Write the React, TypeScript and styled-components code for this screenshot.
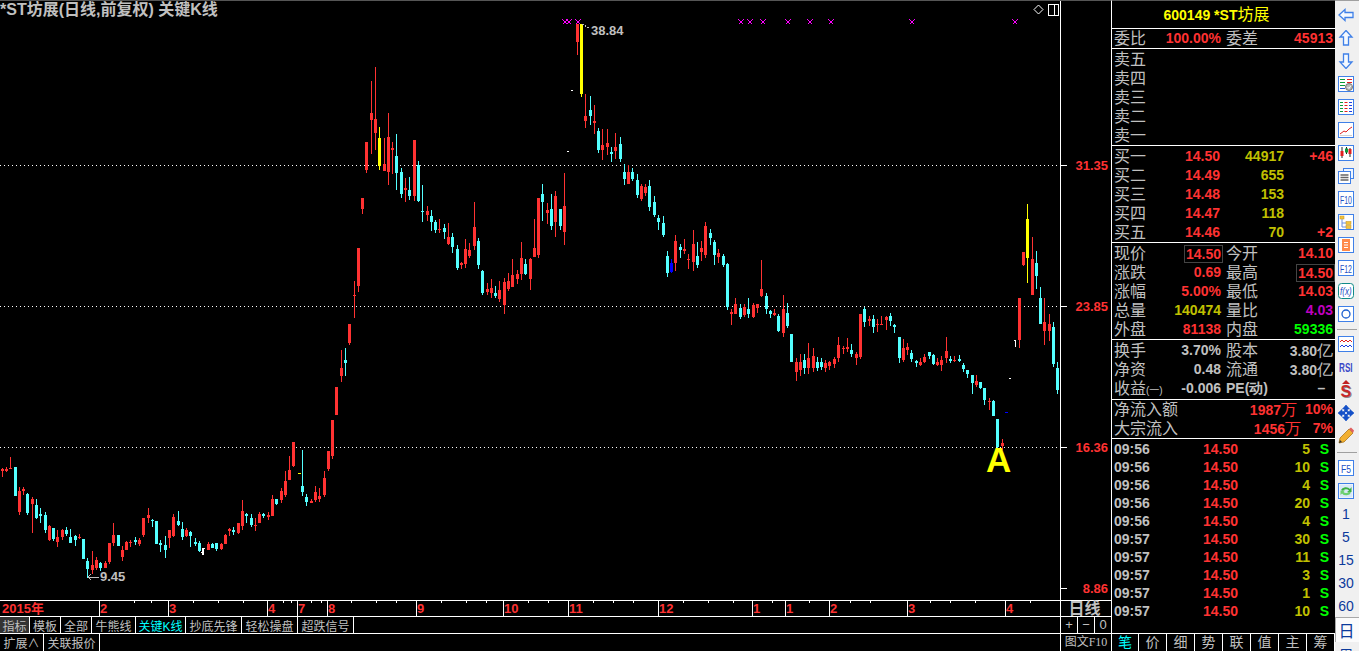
import * as React from "react";
import styled, { createGlobalStyle } from "styled-components";

const RED = "#ff3232";
const CYAN = "#54ffff";
const GREY = "#c0c0c0";
const OLIVE = "#c0c000";
const ICON = "#3f80e8";
const LATIN = '"Liberation Sans", Arial, sans-serif';
const CJK = '"Liberation Sans", "Noto Sans CJK SC", sans-serif';

type Candle = { kind: string; x: number; high: number; top: number; bottom: number; low: number };

// candles are read off the picture: kind x high bodyTop bodyBottom low
const seg = (ox: number, oy: number, scale: number, text: string): Candle[] =>
  text
    .trim()
    .split(/[,\n]+/)
    .map((line) => line.trim().split(/\s+/))
    .filter((p) => p.length === 6)
    .map((p) => {
      const n = p.slice(1).map(Number);
      return {
        kind: p[0],
        x: ox + Math.floor(n[0] / scale),
        high: Math.round(oy + n[1] / scale),
        top: Math.round(oy + n[2] / scale),
        bottom: Math.round(oy + n[3] / scale),
        low: Math.round(oy + n[4] / scale),
      };
    });

const candles: Candle[] = [
  ...seg(0, 430, 3, `
    r 7 114 118 124 140, r 19 111 118 122 125, r 31 81 113 118 118, c 46 111 111 198 198,
    r 58 171 183 246 254, r 70 171 176 183 195, c 82 188 192 249 255, r 97 202 207 222 308,
    c 109 207 225 265 267, c 121 234 252 258 279, c 136 247 255 300 308, r 148 285 288 330 332,
    c 160 294 294 327 333, r 172 300 321 336 351, r 187 297 300 321 330, c 199 291 300 312 318,
    c 211 297 321 339 339, c 226 315 318 330 348, r 238 312 320 324 328, c 250 327 327 387 387,
    c 262 384 393 417 444, r 277 363 405 420 432, r 289 381 390 414 420, c 301 396 399 414 423,
    r 316 393 399 414 414, r 328 339 339 396 402, r 340 279 315 339 348, c 355 315 315 348 348,
    r 367 348 360 381 393, r 379 333 336 360 360, r 391 330 336 339 351, c 406 321 330 336 345,
    r 418 324 330 342 348, r 430 264 264 315 321, r 445 234 255 264 279, c 457 267 270 272 291,
    c 469 273 273 342 342, c 481 330 339 344 366, c 496 318 345 360 384, r 508 300 300 324 354,
    r 520 252 261 318 321, c 535 243 273 285 288, c 547 276 297 321 330, r 559 294 300 318 321,
    c 571 303 306 318 351, c 586 324 336 342 348, c 598 333 339 363 366, w 610 354 354 357 375,
    r 625 336 342 360 360, c 637 339 342 354 354, c 649 339 339 357 363, r 664 339 342 357 360,
    r 676 312 315 342 342, r 688 294 297 303 318, c 700 291 300 306 315, r 715 279 279 309 312,
    r 727 210 243 288 300, c 739 249 252 258 279, c 754 252 264 285 291, r 766 264 285 288 303,
    r 778 246 252 279 279, c 790 249 252 258 264, r 805 246 256 260 270, r 817 195 207 258 258,
    c 829 207 207 222 225, r 844 174 183 210 219, r 856 123 153 195 201, r 868 78 120 150 150,
    r 880 36 36 108 111, c 907 60 168 186 198, c 919 192 201 216 228, r 934 207 212 219 219,
    r 946 168 186 210 216, r 958 174 198 207 216, r 973 123 144 195 201, r 985 63 63 117 123`),
  ...seg(300, 190, 3, `
    r 97 690 690 798 807, r 109 591 591 675 675, r 124 480 534 558 576, c 136 474 510 519 558,
    r 148 402 402 459 465, r 163 273 315 318 384, r 175 174 174 288 306`),
  ...seg(340, 0, 3, `
    r 67 594 594 627 642, r 79 426 426 510 519, r 94 243 339 360 462, r 106 201 357 399 450,
    y 118 381 414 498 510, r 133 414 492 513 513, r 145 339 411 516 555, r 157 426 444 450 522,
    c 169 402 468 519 570, c 184 504 516 582 594, r 196 534 564 570 606, c 208 531 570 588 600,
    r 223 420 420 588 603, c 235 483 495 603 606, c 247 555 633 636 666`),
  ...seg(300, 190, 3, `
    r 382 48 63 75 93, c 394 60 78 96 123, c 406 90 96 120 129, r 418 87 117 120 129,
    c 433 102 114 126 147, r 445 99 141 162 165, c 457 129 141 171 189, c 472 165 177 234 240,
    r 484 216 219 225 237, r 496 147 177 222 234, r 508 159 180 198 204, r 523 36 111 168 180,
    c 535 144 153 225 237, c 547 240 243 309 315, r 562 279 297 306 315, r 574 267 294 309 324,
    c 586 288 309 318 324, r 598 273 300 327 336, r 613 264 276 345 372, r 625 249 273 297 303,
    r 637 207 255 291 291, r 652 240 252 267 282, r 664 156 204 252 270, c 676 207 222 252 255,
    r 691 204 207 267 300, r 703 87 174 201 201`),
  ...seg(0, 0, 1, `
    r 538 198 198 255 258, c 542 184 194 202 221, r 547 203 210 213 224, c 551 194 209 226 230,
    r 555 191 196 222 237, c 560 209 209 226 230, r 564 173 206 232 245`),
  ...seg(340, 0, 3, `
    r 712 72 72 126 165, y 724 72 72 282 291, r 736 282 348 363 384, c 751 288 330 348 375,
    r 763 315 363 369 402, c 775 384 393 450 459, r 787 387 435 450 480, r 802 387 429 441 465,
    c 814 441 456 462 486, r 826 399 441 453 477, c 841 411 432 477 486, c 853 492 516 537 555,
    r 865 495 516 552 552, c 877 504 516 537 543, c 892 522 540 585 594`),
  ...seg(0, 0, 1, `r 641 184 186 199 201, r 645 184 187 193 196, c 649 180 186 207 211`),
  ...seg(630, 190, 3, `
    c 73 18 36 75 81, c 85 75 84 96 120, c 100 78 99 135 141, c 112 183 198 249 261,
    b 124 207 219 246 249, r 136 135 153 219 243, c 151 162 171 180 204, r 163 147 177 183 192,
    r 175 192 207 210 237, r 190 120 162 216 243, c 202 156 198 225 234, r 214 153 174 186 213,
    r 226 96 108 195 204, c 241 117 129 144 165, c 253 150 156 195 225, r 265 177 189 201 219,
    c 280 192 198 225 231, c 292 219 222 351 360, r 304 357 366 372 405, r 316 324 342 372 372,
    c 331 342 354 381 387, r 343 342 351 375 381, c 355 324 357 372 384, r 370 339 345 381 384,
    r 382 342 342 354 369, r 394 210 297 318 321, c 409 309 318 357 372, c 421 360 363 372 384,
    r 433 357 369 375 378, c 445 372 378 423 426, r 460 315 357 429 441, c 472 339 369 408 414`),
  ...seg(0, 0, 1, `
    c 791 334 334 362 362, r 796 358 362 372 381, r 800 354 362 370 376, c 804 354 360 368 374,
    r 808 343 358 368 374, r 813 348 356 368 372, c 817 357 362 368 371, c 821 358 362 367 370,
    r 825 360 363 368 372, r 829 361 362 366 370, r 834 357 359 364 368, r 838 337 345 358 362`),
  ...seg(840, 190, 3, `
    r 10 468 474 477 492, r 22 444 471 477 486, c 34 462 480 492 501, r 49 486 492 504 525,
    r 61 372 372 501 507, c 73 351 357 396 411, r 88 378 387 393 408, c 100 375 387 411 429,
    r 112 387 402 405 426, r 124 378 402 405 405, r 139 378 381 390 420, c 151 369 378 393 408,
    c 163 402 405 411 429, c 178 441 441 504 519, r 190 447 474 510 516, r 202 459 471 480 495,
    c 214 480 489 507 516, c 229 510 513 519 531, r 241 504 516 525 528, r 253 492 501 516 519,
    c 268 486 486 498 507, c 280 492 495 522 525, r 292 504 516 525 528, r 304 498 510 525 543,
    r 319 441 483 504 519, c 331 498 507 513 519, r 343 498 510 513 516, c 358 495 507 513 516,
    c 370 519 525 537 546, c 382 540 540 552 564, c 397 555 555 579 612, r 409 555 573 585 591,
    c 421 576 576 594 597, c 433 594 594 630 645, r 448 624 633 636 660, c 460 630 633 678 678,
    c 472 687 687 770 775, r 487 747 759 768 780, r 538 324 324 450 474, r 550 186 186 225 228,
    y 562 42 87 204 279, r 577 141 207 315 315, c 589 183 219 258 297, c 601 291 324 402 402,
    r 613 324 396 423 465, r 628 372 402 423 453, c 640 396 411 522 531, c 652 516 534 600 612`),
];

const KIND_COLORS: Record<string, string> = { r: RED, c: CYAN, y: "#ffff00", b: "#0000ff", w: "#ffffff" };

const GRID_LINES = [165, 306, 447];
const SIGNALS = [565, 569, 578, 741, 750, 763, 788, 810, 831, 912, 1015];
const STRAY_DASHES = [
  { x: 298, y: 473, w: 3, color: "#ffff00" },
  { x: 571, y: 90, w: 2, color: "#ffffff" },
  { x: 567, y: 151, w: 2, color: "#ffffff" },
  { x: 1009, y: 378, w: 2, color: "#ffffff" },
  { x: 1005, y: 412, w: 3, color: "#0000ff" },
];

const GlobalStyle = createGlobalStyle`
  html, body {
    margin: 0;
    padding: 0;
    background: #000;
    overflow: hidden;
  }
  * {
    box-sizing: border-box;
  }
`;

const Page = styled.div`
  display: flex;
  width: 1359px;
  height: 651px;
  background: #000;
  font-family: ${CJK};
  color: ${GREY};
`;

const LeftPane = styled.div`
  display: flex;
  flex-direction: column;
  width: 1112px;
  height: 651px;
  border-top: 1px solid #555;
  border-right: 1px solid #fff;
`;

const ChartRow = styled.div`
  display: flex;
  height: 599px;
`;

const Plot = styled.div`
  position: relative;
  width: 1060px;
  height: 599px;
  overflow: hidden;
`;

const ChartSvg = styled.svg`
  display: block;
`;

const Title = styled.div`
  position: absolute;
  left: 0;
  top: 0;
  font-size: 16px;
  line-height: 17px;
  font-weight: 700;
  white-space: nowrap;
`;

const Note = styled.div<{ $x: number; $y: number }>`
  position: absolute;
  left: ${(p) => p.$x}px;
  top: ${(p) => p.$y}px;
  font-family: ${LATIN};
  font-size: 13px;
  line-height: 15px;
  font-weight: 700;
`;

const Marker = styled.div`
  position: absolute;
  left: 986px;
  top: 439px;
  font-family: ${LATIN};
  font-size: 35px;
  line-height: 40px;
  font-weight: 700;
  color: #ffff00;
`;

const PriceAxis = styled.div`
  position: relative;
  width: 51px;
  border-left: 1px solid #fff;
`;

const AxisTick = styled.div<{ $y: number }>`
  position: absolute;
  left: 0;
  top: ${(p) => p.$y}px;
  width: 6px;
  height: 1px;
  background: #fff;
`;

const AxisLabel = styled.div<{ $y: number }>`
  position: absolute;
  right: 3px;
  top: ${(p) => p.$y}px;
  font-family: ${LATIN};
  font-size: 13px;
  line-height: 15px;
  font-weight: 700;
  color: ${RED};
`;

const StripRow = styled.div<{ $h: number }>`
  display: flex;
  height: ${(p) => p.$h}px;
  border-top: 1px solid #fff;
`;

const TimeAxis = styled.div`
  position: relative;
  width: 1060px;
  overflow: hidden;
`;

const TimeTick = styled.div<{ $x: number; $major?: boolean }>`
  position: absolute;
  left: ${(p) => p.$x}px;
  top: 0;
  width: 1px;
  height: ${(p) => (p.$major ? "15px" : "2px")};
  background: #fff;
`;

const TimeLabel = styled.div<{ $x: number }>`
  position: absolute;
  left: ${(p) => p.$x}px;
  top: 0;
  font-size: 13px;
  line-height: 15px;
  font-weight: 700;
  color: ${RED};
  white-space: nowrap;
`;

const PeriodBox = styled.div`
  width: 51px;
  padding-right: 3px;
  border-left: 1px solid #fff;
  font-size: 16px;
  line-height: 15px;
  font-weight: 700;
  text-align: center;
`;

const TabStrip = styled.div`
  display: flex;
  width: 1060px;
`;

const TabCell = styled.div<{ $w: number; $active?: boolean; $hot?: boolean }>`
  display: flex;
  align-items: center;
  justify-content: center;
  width: ${(p) => p.$w}px;
  border-right: 1px solid #fff;
  font-size: 12px;
  white-space: nowrap;
  background: ${(p) => (p.$active ? "#333" : "transparent")};
  color: ${(p) => (p.$hot ? "#00ffff" : GREY)};
`;

const StepGroup = styled.div`
  display: flex;
  width: 51px;
  border-left: 1px solid #fff;
`;

const StepCell = styled.div`
  flex: 1;
  font-family: ${LATIN};
  font-size: 13px;
  line-height: 16px;
  text-align: center;
  & + & {
    border-left: 1px solid #fff;
  }
`;

const F10Cell = styled.div`
  width: 51px;
  border-left: 1px solid #fff;
  font-size: 12px;
  line-height: 17px;
  text-align: center;
  white-space: nowrap;
  span {
    font-family: "Liberation Serif", serif;
  }
`;

const RightPane = styled.div`
  display: flex;
  flex-direction: column;
  width: 223px;
  height: 651px;
  border-top: 1px solid #555;
`;

const CodeHeader = styled.div`
  height: 28px;
  padding-right: 14px;
  border-bottom: 1px solid #fff;
  font-size: 14px;
  line-height: 28px;
  font-weight: 700;
  color: #ffff00;
  text-align: center;
  span {
    font-size: 16px;
    font-weight: 400;
  }
`;

const Section = styled.div<{ $h: number; $pad?: number }>`
  height: ${(p) => p.$h}px;
  padding: ${(p) => p.$pad || 0}px 2px 0 2px;
  border-bottom: 1px solid #fff;
`;

const Label = styled.span`
  font-size: 16px;
  font-weight: 400;
  color: ${GREY};
  white-space: nowrap;
`;

const Paren = styled.span`
  font-size: 10px;
`;

const Num = styled.span<{ $color?: string }>`
  font-family: ${LATIN};
  font-size: 14px;
  font-weight: 700;
  white-space: nowrap;
  color: ${(p) => p.$color || GREY};
`;

const Unit = styled.span`
  font-size: 16px;
  font-weight: 400;
`;

const BoxedNum = styled(Num)`
  display: inline-block;
  height: 18px;
  margin-right: -2px;
  padding: 0 1px;
  border: 1px solid #444;
  line-height: 16px;
`;

const BandRow = styled.div`
  display: grid;
  grid-template-columns: 32px 74px 64px 49px;
  height: 19px;
  line-height: 19px;
  text-align: right;
  ${Label} {
    text-align: left;
  }
`;

const PairGrid = styled.div`
  display: grid;
  grid-template-columns: 107px 107px;
  column-gap: 5px;
`;

const Pair = styled.div`
  display: flex;
  justify-content: space-between;
  height: 19px;
  line-height: 19px;
`;

const SellRow = styled.div`
  height: 19px;
  line-height: 19px;
`;

const FlowRow = styled.div`
  display: flex;
  height: 19px;
  line-height: 19px;
`;

const FlowAmount = styled.span`
  margin-left: auto;
  font-family: ${LATIN};
  font-size: 14px;
  font-weight: 700;
  color: ${RED};
`;

const FlowPct = styled(FlowAmount)<{ $w: number }>`
  flex: 0 0 ${(p) => p.$w}px;
  margin-left: 0;
  text-align: right;
`;

const TickRow = styled.div`
  display: grid;
  grid-template-columns: 35px 89px 72px 1fr;
  height: 18px;
  line-height: 18px;
  text-align: right;
  font-family: ${LATIN};
  font-size: 14px;
  font-weight: 700;
`;

const BookTabs = styled.div`
  display: flex;
  flex: 1;
`;

const BookTab = styled.div<{ $hot?: boolean }>`
  flex: 0 0 28px;
  font-size: 14px;
  line-height: 17px;
  text-align: center;
  color: ${(p) => (p.$hot ? "#00ffff" : GREY)};
  border-left: 1px solid #fff;
  &:first-child {
    flex-basis: 26px;
    border-left: 0;
  }
  &:last-child {
    flex-basis: 29px;
    border-right: 1px solid #fff;
  }
`;

const Toolbar = styled.div`
  display: flex;
  flex-direction: column;
  width: 24px;
  height: 651px;
  padding-top: 2px;
  background: #f0f0f0;
  border-top: 1px solid #a0a0a0;
  overflow: hidden;
`;

const ToolSlot = styled.div`
  display: flex;
  flex: 0 0 23px;
  align-items: center;
  justify-content: center;
  padding-right: 2px;
  font-family: ${CJK};
  font-size: 14px;
  color: #0b3a9c;
`;

const PressedSlot = styled(ToolSlot)`
  flex-basis: 24px;
  font-size: 16px;
  background: #fbfbfb;
  border-top: 1px solid #a8a8a8;
  border-left: 1px solid #a8a8a8;
`;

const ToolDivider = styled.div<{ $before: number; $after: number }>`
  flex: 0 0 1px;
  margin: ${(p) => p.$before}px 2px ${(p) => p.$after}px;
  background: #a0a0a0;
`;

const Glyph = ({ children }: { children: React.ReactNode }) => (
  <svg width="16" height="16" viewBox="0 0 16 16">
    {children}
  </svg>
);

const Framed = ({ children, stroke = ICON }: { children: React.ReactNode; stroke?: string }) => (
  <Glyph>
    <rect x="0.5" y="0.5" width="15" height="15" fill="#fff" stroke={stroke} />
    {children}
  </Glyph>
);

// narrow captions inside the toolbar icons, squeezed horizontally to fit the frame
const IconText = ({ children, x = 2, squeeze, size = 11, y = 12.5, italic, fill = "#1c4fc4", bold }: {
  children: string; x?: number; squeeze: number; size?: number; y?: number; italic?: boolean; fill?: string; bold?: boolean;
}) => (
  <text
    transform={`translate(${x} ${y}) scale(${squeeze} 1)`}
    fontSize={size}
    fill={fill}
    fontStyle={italic ? "italic" : "normal"}
    fontWeight={bold ? 700 : 400}
    style={{ fontFamily: "Liberation Sans, sans-serif" }}
  >
    {children}
  </text>
);

const toolIcons: React.ReactNode[] = [
  <Glyph><path d="M1 8 7 2.5V5.5H15V10.5H7V13.5Z" fill="#f4f9ff" stroke={ICON} strokeWidth="1.3" /></Glyph>,
  <Glyph><path d="M8 .5 14 7H10.5V15H5.5V7H2Z" fill="#f4f9ff" stroke={ICON} strokeWidth="1.3" /></Glyph>,
  <Glyph><path d="M8 15.5 14 9H10.5V1H5.5V9H2Z" fill="#f4f9ff" stroke={ICON} strokeWidth="1.3" /></Glyph>,
  <Framed>
    <path d="M2 3.5H7M2 6.5H7M2 9.5H7" stroke="#0a9a3a" />
    <path d="M9 3.5H14M9 6.5H14" stroke="#e02020" />
    <path d="M2 12.5H7" stroke="#2050d0" />
    <circle cx="11" cy="11" r="3.5" fill="#b8b8b8" stroke="#777" />
    <path d="M9.5 11 11 12.5 13 9.5" fill="none" stroke="#fff" />
  </Framed>,
  <Framed>
    <path d="M2 3.5H5M2 6.5H5M2 9.5H5M2 12.5H5" stroke="#0a9a3a" />
    <path d="M6.5 3.5H9.5M6.5 6.5H9.5M6.5 9.5H9.5M6.5 12.5H9.5" stroke="#e02020" />
    <path d="M11 3.5H14M11 6.5H14M11 9.5H14M11 12.5H14" stroke="#2040e0" />
  </Framed>,
  <Framed>
    <path d="M2 12 6 9 8 10 11 7 14 5" fill="none" stroke="#e02020" />
    <path d="M2 13.5H14" stroke="#d0d0d0" />
  </Framed>,
  <Framed>
    <path d="M4 2V13M8.5 2V9M12 3V12" stroke="#222" />
    <rect x="2.5" y="6" width="3" height="5" fill="#e02020" />
    <rect x="7" y="3.5" width="3" height="4" fill="#0a9a3a" />
    <rect x="10.5" y="4" width="3" height="5" fill="#e02020" />
  </Framed>,
  <Glyph>
    <rect x="5.5" y="0.5" width="10" height="10" fill="#eef5ff" stroke={ICON} />
    <rect x="0.5" y="3.5" width="12" height="12" fill="#fff" stroke={ICON} />
    <path d="M2.5 7H10.5M2.5 9.5H10.5M2.5 12H10.5" stroke="#666" strokeWidth="1.4" />
  </Glyph>,
  <Framed><IconText squeeze={0.63}>F10</IconText></Framed>,
  <Framed>
    <path d="M4 5V13H8M4 9H8" fill="none" stroke="#6a8fe0" />
    <rect x="2" y="2" width="4" height="3" fill="#f2c43c" stroke="#c09020" strokeWidth=".5" />
    <rect x="8" y="7.5" width="5" height="3" fill="#f2c43c" stroke="#c09020" strokeWidth=".5" />
    <rect x="8" y="11.5" width="5" height="3" fill="#f2c43c" stroke="#c09020" strokeWidth=".5" />
  </Framed>,
  <Framed>
    <rect x="4" y="2" width="8" height="12" fill="#ff8a4a" />
    <path d="M6 5.5H10M6 8H10M6 10.5H10" stroke="#fff" />
  </Framed>,
  <Framed><IconText squeeze={0.63}>F12</IconText></Framed>,
  <Glyph>
    <rect x="0.5" y="0.5" width="15" height="15" rx="3" fill="#fff" stroke="#0f8a88" />
    <IconText italic size={10} y={12} squeeze={0.8}>f(x)</IconText>
  </Glyph>,
  <Framed>
    <circle cx="8" cy="8" r="4" fill="none" stroke="#1c5fd0" strokeWidth="1.3" />
  </Framed>,
];

const analysisIcons: React.ReactNode[] = [
  <Framed>
    <path d="M2 6 4 4 6 6 8 4 10 6 12 4 14 6" fill="none" stroke="#e02020" />
    <path d="M2 11 4 9 6 11 8 9 10 11 12 9 14 11" fill="none" stroke="#2040e0" />
  </Framed>,
  <svg width="16" height="14" viewBox="0 0 16 14">
    <IconText x={1} y={12} size={12} squeeze={0.68} bold fill="#3a48c8">RSI</IconText>
  </svg>,
  <svg width="16" height="19" viewBox="0 0 16 19">
    <path d="M8 0 12 4H4Z" fill="#c02020" />
    <text x="3.5" y="18" fontSize="16" fontWeight="700" fill="#888" style={{ fontFamily: "Liberation Sans, sans-serif" }}>S</text>
    <text x="2.5" y="17" fontSize="16" fontWeight="700" fill="#c82828" style={{ fontFamily: "Liberation Sans, sans-serif" }}>S</text>
  </svg>,
  <svg width="16" height="16" viewBox="0 0 16 16">
    <path d="M8 0 11.5 4H9.5V6.5H12V4.5L16 8 12 11.5V9.5H9.5V12H11.5L8 16 4.5 12H6.5V9.5H4V11.5L0 8 4 4.5V6.5H6.5V4H4.5Z" fill="#1450c8" stroke="#1450c8" strokeWidth=".6" />
    <circle cx="8" cy="8" r="1" fill="#fff" />
  </svg>,
  <svg width="17" height="17" viewBox="0 0 17 17">
    <path d="M1 16 2 11 11 2 15 6 6 15Z" fill="#f2b030" stroke="#a06a10" strokeWidth=".7" />
    <path d="M11 2 13 0.5 16 3.5 15 6Z" fill="#e06060" />
    <path d="M1 16 2 13 4 15Z" fill="#333" />
  </svg>,
];

const refreshIcons: React.ReactNode[] = [
  <Framed><IconText x={3} squeeze={0.78}>F5</IconText></Framed>,
  <Framed>
    <rect x="1.5" y="1.5" width="13" height="13" fill="#d8e8f8" />
    <path d="M3 7A5 4 0 0 1 12 6L13.5 4V9H9L11 7.5A3.5 3 0 0 0 5 8Z" fill="#3cb043" />
    <path d="M13 9.5A5 4 0 0 1 4 10.5L2.5 12V7.5H7L5.5 9A3.5 3 0 0 0 11 8.5Z" fill="#6cd070" />
  </Framed>,
];

const months = [
  { x: 99, t: "2" }, { x: 168, t: "3" }, { x: 267, t: "4" }, { x: 297, t: "7" }, { x: 327, t: "8" },
  { x: 416, t: "9" }, { x: 503, t: "10" }, { x: 568, t: "11" }, { x: 658, t: "12" }, { x: 752, t: "1" },
  { x: 785, t: "1" }, { x: 829, t: "2" }, { x: 907, t: "3" }, { x: 1005, t: "4" },
];
const minorTicks = [134, 151, 193, 218, 243, 283, 291, 311, 321, 351, 376, 396, 441, 466, 486, 528, 548, 593, 613, 633, 683, 708, 733, 772, 809, 850, 870, 930, 950, 975, 1030];

const tabs = [
  { t: "指标", w: 30, active: true },
  { t: "模板", w: 31 },
  { t: "全部", w: 31 },
  { t: "牛熊线", w: 44 },
  { t: "关键K线", w: 50, hot: true },
  { t: "抄底先锋", w: 56 },
  { t: "轻松操盘", w: 56 },
  { t: "超跌信号", w: 56 },
];

const bands = [
  ["买一", "14.50", "44917", "+46"],
  ["买二", "14.49", "655", ""],
  ["买三", "14.48", "153", ""],
  ["买四", "14.47", "118", ""],
  ["买五", "14.46", "70", "+2"],
];

const ticks: [string, string][] = [
  ["09:56", "5"], ["09:56", "10"], ["09:56", "4"], ["09:56", "20"], ["09:56", "4"],
  ["09:57", "30"], ["09:57", "11"], ["09:57", "3"], ["09:57", "1"], ["09:57", "10"],
];

const Chart = () => (
  <ChartSvg width="1060" height="599" viewBox="0 1 1060 599" shapeRendering="crispEdges">
    {GRID_LINES.map((y) => (
      <line key={y} x1="0" x2="1060" y1={y + 0.5} y2={y + 0.5} stroke="#fff" strokeDasharray="1 3" />
    ))}
    {candles.map((c) => {
      const color = KIND_COLORS[c.kind];
      return (
        <g key={c.x} fill={color}>
          <rect x={c.x} y={c.high} width="1" height={Math.max(c.low - c.high, 1)} />
          <rect x={c.x - 1} y={c.top} width="3" height={Math.max(c.bottom - c.top, 1)} />
        </g>
      );
    })}
    {STRAY_DASHES.map((d) => (
      <rect key={d.x} x={d.x} y={d.y} width={d.w} height="1" fill={d.color} />
    ))}
    <path d="M1014 340h2v7h-1v-6h-1z" fill="#fff" />
    <path d="M202 548h1v7h-1zM201 552h1v1h-1z" fill="#fff" />
    {SIGNALS.map((x) => (
      <path key={x} d={`M${x - 2.5} 19.5l5 5M${x + 2.5} 19.5l-5 5`} stroke="#ff00ff" strokeWidth="1.3" fill="none" />
    ))}
    <path d="M582 24 589 28" stroke={GREY} strokeDasharray="2 1" fill="none" />
    <path d="M88 577H99M88 577l3-3M88 577l3 3" stroke={GREY} fill="none" />
    <path d="M1038.5 5 1043 9.5 1038.5 14 1034 9.5Z" fill="none" stroke="#fff" shapeRendering="auto" />
    <path d="M1048.5 4.5H1058.5V15.5H1048.5ZM1054.5 4.5V15.5" fill="none" stroke="#fff" />
  </ChartSvg>
);

export default function App() {
  return (
    <>
      <GlobalStyle />
      <Page>
        <LeftPane>
          <ChartRow>
            <Plot>
              <Chart />
              <Title>*ST坊展(日线,前复权) 关键K线</Title>
              <Note $x={591} $y={22}>38.84</Note>
              <Note $x={100} $y={568}>9.45</Note>
              <Marker>A</Marker>
            </Plot>
            <PriceAxis>
              <AxisTick $y={164} /><AxisLabel $y={157}>31.35</AxisLabel>
              <AxisTick $y={305} /><AxisLabel $y={298}>23.85</AxisLabel>
              <AxisTick $y={446} /><AxisLabel $y={439}>16.36</AxisLabel>
              <AxisTick $y={587} /><AxisLabel $y={580}>8.86</AxisLabel>
            </PriceAxis>
          </ChartRow>
          <StripRow $h={16}>
            <TimeAxis>
              <TimeLabel $x={2}>2015年</TimeLabel>
              {minorTicks.map((x) => <TimeTick key={x} $x={x} />)}
              {months.map((m) => (
                <React.Fragment key={m.x}>
                  <TimeTick $x={m.x} $major />
                  <TimeLabel $x={m.x + 1}>{m.t}</TimeLabel>
                </React.Fragment>
              ))}
            </TimeAxis>
            <PeriodBox>日线</PeriodBox>
          </StripRow>
          <StripRow $h={17}>
            <TabStrip>
              {tabs.map((t) => (
                <TabCell key={t.t} $w={t.w} $active={t.active} $hot={t.hot}>{t.t}</TabCell>
              ))}
            </TabStrip>
            <StepGroup>
              <StepCell>+</StepCell>
              <StepCell>−</StepCell>
              <StepCell>0</StepCell>
            </StepGroup>
          </StripRow>
          <StripRow $h={18}>
            <TabStrip>
              <TabCell $w={44}>扩展∧</TabCell>
              <TabCell $w={56}>关联报价</TabCell>
            </TabStrip>
            <F10Cell>图文<span>F10</span></F10Cell>
          </StripRow>
        </LeftPane>

        <RightPane>
          <CodeHeader>600149 *ST<span>坊展</span></CodeHeader>
          <Section $h={20}>
            <PairGrid>
              <Pair><Label>委比</Label><Num $color={RED}>100.00%</Num></Pair>
              <Pair><Label>委差</Label><Num $color={RED}>45913</Num></Pair>
            </PairGrid>
          </Section>
          <Section $h={97} $pad={1}>
            {["卖五", "卖四", "卖三", "卖二", "卖一"].map((t) => (
              <SellRow key={t}><Label>{t}</Label></SellRow>
            ))}
          </Section>
          <Section $h={97} $pad={1}>
            {bands.map((b) => (
              <BandRow key={b[0]}>
                <Label>{b[0]}</Label>
                <Num $color={RED}>{b[1]}</Num>
                <Num $color={OLIVE}>{b[2]}</Num>
                <Num $color={RED}>{b[3]}</Num>
              </BandRow>
            ))}
          </Section>
          <Section $h={97} $pad={1}>
            <PairGrid>
              <Pair><Label>现价</Label><span><BoxedNum $color={RED}>14.50</BoxedNum></span></Pair>
              <Pair><Label>今开</Label><Num $color={RED}>14.10</Num></Pair>
              <Pair><Label>涨跌</Label><Num $color={RED}>0.69</Num></Pair>
              <Pair><Label>最高</Label><span><BoxedNum $color={RED}>14.50</BoxedNum></span></Pair>
              <Pair><Label>涨幅</Label><Num $color={RED}>5.00%</Num></Pair>
              <Pair><Label>最低</Label><Num $color={RED}>14.03</Num></Pair>
              <Pair><Label>总量</Label><Num $color={OLIVE}>140474</Num></Pair>
              <Pair><Label>量比</Label><Num $color="#c000c0">4.03</Num></Pair>
              <Pair><Label>外盘</Label><Num $color={RED}>81138</Num></Pair>
              <Pair><Label>内盘</Label><Num $color="#00ff00">59336</Num></Pair>
            </PairGrid>
          </Section>
          <Section $h={60} $pad={1}>
            <PairGrid>
              <Pair><Label>换手</Label><Num>3.70%</Num></Pair>
              <Pair><Label>股本</Label><Num>3.80<Unit>亿</Unit></Num></Pair>
              <Pair><Label>净资</Label><Num>0.48</Num></Pair>
              <Pair><Label>流通</Label><Num>3.80<Unit>亿</Unit></Num></Pair>
              <Pair><Label>收益<Paren>(一)</Paren></Label><Num>-0.006</Num></Pair>
              <Pair><Num>PE(动)</Num><Num>–&nbsp;&nbsp;</Num></Pair>
            </PairGrid>
          </Section>
          <Section $h={39}>
            <FlowRow>
              <Label>净流入额</Label>
              <FlowAmount>1987<Unit>万</Unit></FlowAmount>
              <FlowPct $w={36}>10%</FlowPct>
            </FlowRow>
            <FlowRow>
              <Label>大宗流入</Label>
              <FlowAmount>1456<Unit>万</Unit></FlowAmount>
              <FlowPct $w={32}>7%</FlowPct>
            </FlowRow>
          </Section>
          <Section $h={195} $pad={1}>
            {ticks.map((t, i) => (
              <TickRow key={i}>
                <Num>{t[0]}</Num>
                <Num $color={RED}>14.50</Num>
                <Num $color={OLIVE}>{t[1]}</Num>
                <Num $color="#00ff00">S&nbsp;</Num>
              </TickRow>
            ))}
          </Section>
          <BookTabs>
            {["笔", "价", "细", "势", "联", "值", "主", "筹"].map((t, i) => (
              <BookTab key={t} $hot={i === 0}>{t}</BookTab>
            ))}
          </BookTabs>
        </RightPane>

        <Toolbar>
          {toolIcons.map((icon, i) => <ToolSlot key={i}>{icon}</ToolSlot>)}
          <ToolDivider $before={4} $after={2} />
          {analysisIcons.map((icon, i) => <ToolSlot key={i}>{icon}</ToolSlot>)}
          <ToolDivider $before={5} $after={3} />
          {refreshIcons.map((icon, i) => <ToolSlot key={i}>{icon}</ToolSlot>)}
          {["1", "5", "15", "30", "60"].map((t) => <ToolSlot key={t}>{t}</ToolSlot>)}
          <PressedSlot>日</PressedSlot>
          <ToolSlot>周</ToolSlot>
        </Toolbar>
      </Page>
    </>
  );
}
